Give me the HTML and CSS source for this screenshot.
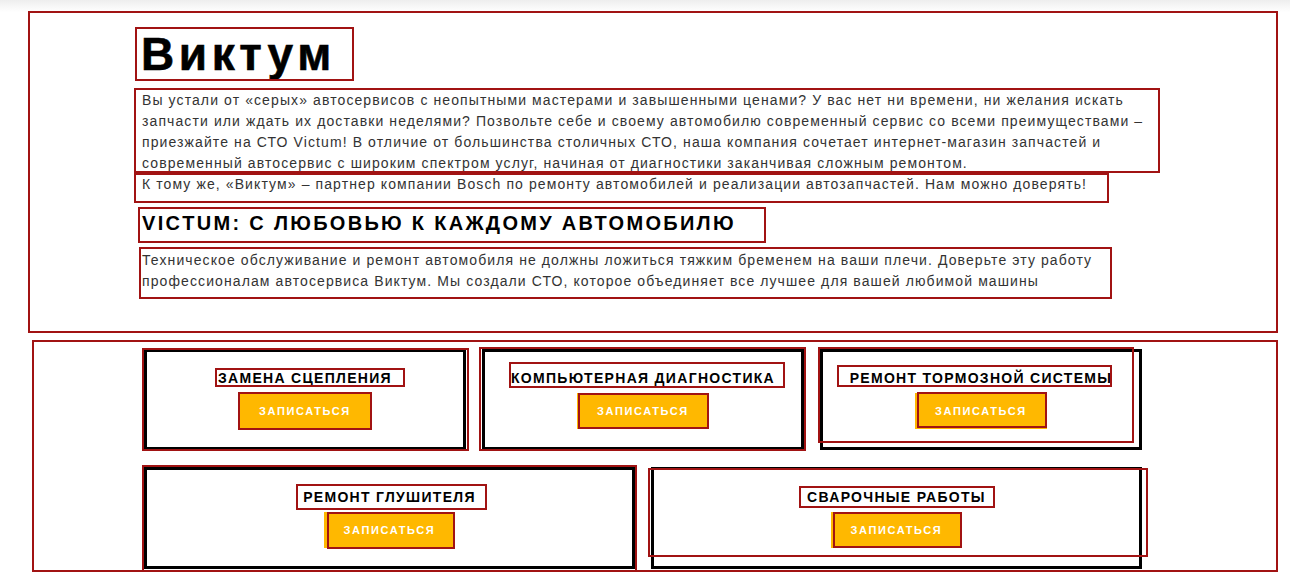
FILE: index.html
```html
<!DOCTYPE html>
<html lang="ru">
<head>
<meta charset="utf-8">
<title>Виктум</title>
<link rel="stylesheet" href="styles.css">
</head>
<body>
<section class="intro">
  <div class="intro-col">
    <h1 class="brand mark m-h1">Виктум</h1>
    <p class="lead mark m-p1">Вы устали от «серых» автосервисов с неопытными мастерами и завышенными ценами? У вас нет ни времени, ни желания искать запчасти или ждать их доставки неделями? Позвольте себе и своему автомобилю современный сервис со всеми преимуществами – приезжайте на СТО Victum! В отличие от большинства столичных СТО, наша компания сочетает интернет-магазин запчастей и современный автосервис с широким спектром услуг, начиная от диагностики заканчивая сложным ремонтом.</p>
    <p class="lead mark m-p2">К тому же, «Виктум» – партнер компании Bosch по ремонту автомобилей и реализации автозапчастей. Нам можно доверять!</p>
    <h2 class="tagline mark m-h2">VICTUM: С ЛЮБОВЬЮ К КАЖДОМУ АВТОМОБИЛЮ</h2>
    <p class="lead mark m-p3">Техническое обслуживание и ремонт автомобиля не должны ложиться тяжким бременем на ваши плечи. Доверьте эту работу профессионалам автосервиса Виктум. Мы создали СТО, которое объединяет все лучшее для вашей любимой машины</p>
  </div>
</section>
<section class="services">
  <div class="row row-3">
    <div class="card mark c1">
      <span class="card-title mark t1">ЗАМЕНА СЦЕПЛЕНИЯ</span>
      <a class="btn mark b1" href="#">ЗАПИСАТЬСЯ</a>
    </div>
    <div class="card mark c2">
      <span class="card-title mark t2">КОМПЬЮТЕРНАЯ ДИАГНОСТИКА</span>
      <a class="btn mark b2" href="#">ЗАПИСАТЬСЯ</a>
    </div>
    <div class="card mark c3">
      <span class="card-title mark t3">РЕМОНТ ТОРМОЗНОЙ СИСТЕМЫ</span>
      <a class="btn mark b3" href="#">ЗАПИСАТЬСЯ</a>
    </div>
  </div>
  <div class="row row-2">
    <div class="card card-wide mark c4">
      <span class="card-title mark t4">РЕМОНТ ГЛУШИТЕЛЯ</span>
      <a class="btn mark b4" href="#">ЗАПИСАТЬСЯ</a>
    </div>
    <div class="card card-wide mark c5">
      <span class="card-title mark t5">СВАРОЧНЫЕ РАБОТЫ</span>
      <a class="btn mark b5" href="#">ЗАПИСАТЬСЯ</a>
    </div>
  </div>
</section>
</body>
</html>
```

FILE: styles.css
```css
html, body {
  margin: 0;
  padding: 0;
}
body {
  width: 1290px;
  height: 573px;
  overflow: hidden;
  background: linear-gradient(#eeeeee 0, #ffffff 12px);
  font-family: "Liberation Sans", Arial, sans-serif;
  color: #333;
}

.mark { position: relative; }
.mark::after {
  content: "";
  position: absolute;
  box-sizing: border-box;
  border: 2px solid #a11313;
  pointer-events: none;
}

/* ---------- intro ---------- */
.intro {
  margin: 11px 12px 0 28px;
  border: 2px solid #a11313;
  background: #fff;
  padding: 14px 0 39px 112px;
}
.intro-col {
  width: 1012px;
}
.brand {
  margin: 0 0 9px -1px;
  font-size: 46px;
  line-height: 54px;
  height: 54px;
  font-weight: 700;
  letter-spacing: 4.6px;
  color: #000;
  -webkit-text-stroke: 0.6px #000;
}
.m-h1::after { left: -6px; top: 0; width: 219px; height: 54px; }

.lead {
  margin: 0;
  font-size: 14px;
  line-height: 21px;
  letter-spacing: 1.1px;
  color: #333;
}
.m-p1::after { left: -8px; top: -2px; width: 1026px; height: 85px; }
.m-p2::after { left: -8px; top: -1px; width: 975px; height: 30px; }

.tagline {
  margin: 14px 0 13px;
  font-size: 20px;
  line-height: 28px;
  font-weight: 700;
  letter-spacing: 2.3px;
  color: #000;
}
.m-h2::after { left: -4px; top: -2px; width: 628px; height: 36px; }
.m-p3::after { left: -3px; top: -3px; width: 973px; height: 52px; }

/* ---------- services ---------- */
.services {
  margin: 7px 12px 0 32px;
  border: 2px solid #a11313;
  background: #fff;
  padding: 7px 0 1px 110px;
}
.row {
  display: grid;
  width: 998px;
  column-gap: 16px;
}
.row-3 { grid-template-columns: repeat(3, 1fr); }
.row-2 { grid-template-columns: repeat(2, 1fr); margin-top: 17px; }

.card {
  border: 3px solid #000;
  display: flex;
  flex-direction: column;
  align-items: center;
  padding: 16px 0 18px;
}
.card-wide { padding-top: 17px; }

.c1::after { left: -5px; top: -4px; right: -6px; bottom: -4px; }
.c2::after { left: -6px; top: -5px; right: -5px; bottom: -4px; }
.c3::after { left: -5px; top: -5px; right: 5px; bottom: 4px; }
.c4::after { left: -5px; top: -5px; right: -5px; bottom: -6px; }
.c5::after { left: -6px; top: -2px; right: -9px; bottom: 9px; }

.card-title {
  display: inline-block;
  font-size: 14px;
  line-height: 20px;
  font-weight: 700;
  letter-spacing: 1.3px;
  color: #000;
}
.t1::after { left: -3px; top: 0; right: -13px; bottom: 1px; }
.t2::after { left: -2px; top: -6px; right: -10px; bottom: 0; }
.t3::after { left: -13px; top: -3px; right: 0; bottom: 1px; }
.t4::after { left: -7px; top: -3px; right: -11px; bottom: -3px; }
.t5::after { left: -8px; top: -1px; right: -9px; bottom: -1px; }

.btn {
  display: block;
  margin-top: 5px;
  height: 36px;
  line-height: 36px;
  padding: 0 20px;
  background: #ffb800;
  color: #fff;
  font-size: 11px;
  font-weight: 700;
  letter-spacing: 1.6px;
  text-decoration: none;
}
.b1::after { left: -1px; top: -1px; right: -1px; bottom: -1px; }
.b2::after { left: 1px; top: 0; right: 0; bottom: 0; }
.b3::after { left: 2px; top: -1px; right: 0; bottom: 1px; }
.b4::after { left: 3px; top: 0; right: 0; bottom: -1px; }
.b5::after { left: 2px; top: 0; right: 0; bottom: 0; }
```
